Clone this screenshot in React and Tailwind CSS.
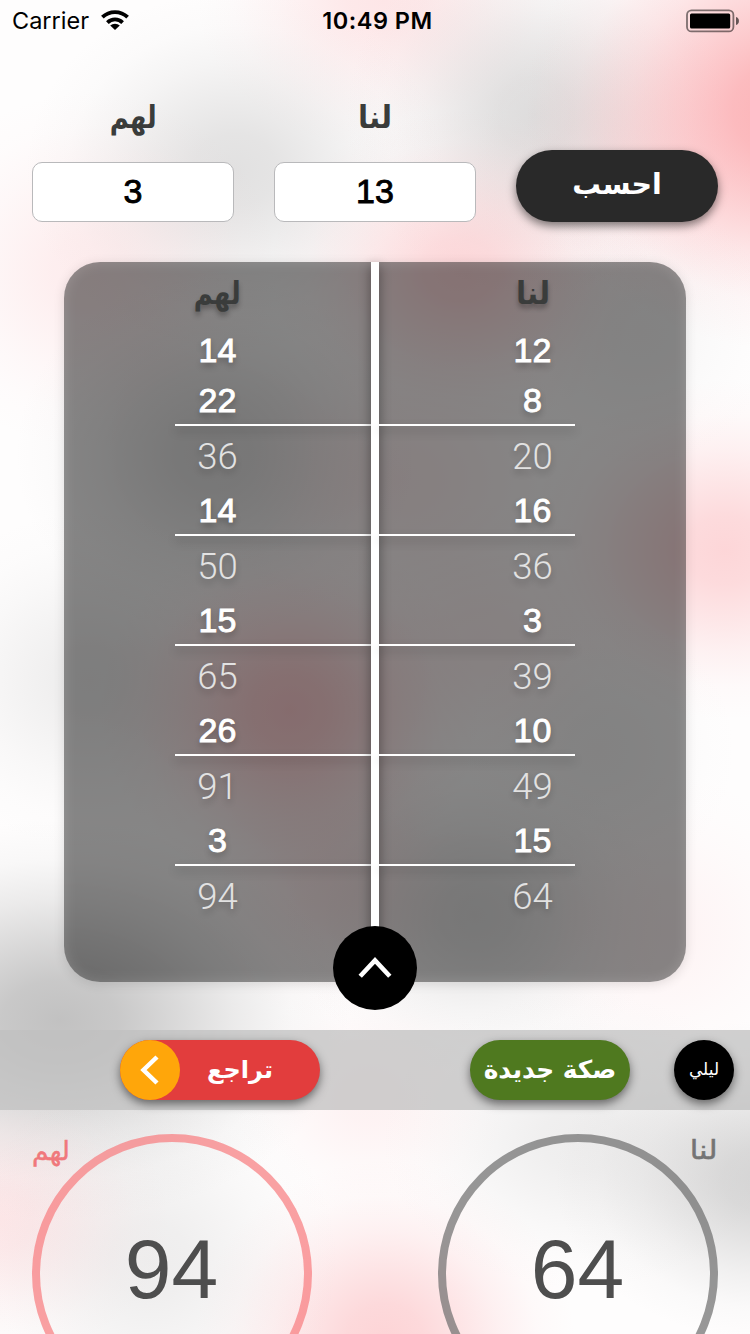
const HELV = "font-['Liberation_Sans',Arial,sans-serif]";
const ARABIC = "font-['DejaVu_Sans',sans-serif]";

const theirs = [14, 22, 36, 14, 50, 15, 65, 26, 91, 3, 94];
const ours = [12, 8, 20, 16, 36, 3, 39, 10, 49, 15, 64];

// Soft colour spots of the backdrop: tone, centre, radii, strength
const spots = [
  ['pink', 385, 0, 190, 150, 0.25],
  ['gray', 235, 170, 210, 180, 0.32],
  ['pink', 640, 170, 170, 150, 0.14],
  ['gray', 535, 115, 190, 180, 0.36],
  ['pink', 785, 110, 260, 240, 0.8],
  ['pink', 90, 270, 190, 180, 0.18],
  ['pink', 460, 270, 190, 160, 0.4],
  ['gray', 215, 455, 200, 180, 0.34],
  ['gray', 640, 330, 140, 140, 0.08],
  ['pink', 400, 480, 190, 160, 0.14],
  ['pink', 725, 550, 200, 170, 0.42],
  ['gray', 90, 680, 190, 170, 0.18],
  ['pink', 290, 710, 190, 180, 0.52],
  ['pink', 480, 640, 160, 140, 0.12],
  ['gray', 600, 750, 140, 140, 0.08],
  ['gray', 475, 915, 190, 160, 0.32],
  ['pink', 330, 880, 150, 140, 0.18],
  ['pink', 660, 930, 170, 160, 0.1],
  ['gray', 60, 1020, 290, 200, 0.68],
  ['pink', 370, 1100, 140, 120, 0.12],
  ['pink', 0, 1220, 170, 140, 0.24],
  ['gray', 150, 1260, 190, 190, 0.18],
  ['gray', 580, 1140, 200, 150, 0.18],
  ['gray', 765, 1180, 210, 160, 0.46],
  ['pink', 385, 1340, 190, 180, 0.44],
];

function Tone({ id, color }) {
  return (
    <radialGradient id={id}>
      <stop offset="0" stopColor={color} stopOpacity="1" />
      <stop offset=".2" stopColor={color} stopOpacity=".88" />
      <stop offset=".4" stopColor={color} stopOpacity=".6" />
      <stop offset=".6" stopColor={color} stopOpacity=".31" />
      <stop offset=".8" stopColor={color} stopOpacity=".09" />
      <stop offset="1" stopColor={color} stopOpacity="0" />
    </radialGradient>
  );
}

function Backdrop() {
  return (
    <svg className="absolute inset-0 h-[1334px] w-[750px]" viewBox="0 0 750 1334" aria-hidden="true">
      <defs>
        <Tone id="pink" color="#fba0a5" />
        <Tone id="gray" color="#a5a5a5" />
      </defs>
      {spots.map(([tone, cx, cy, rx, ry, strength], i) => (
        <ellipse key={i} cx={cx} cy={cy} rx={rx} ry={ry} fill={`url(#${tone})`} opacity={strength} />
      ))}
    </svg>
  );
}

function Bold({ children, className = '' }) {
  return (
    <div className={`${HELV} flex items-center justify-center text-[34px] leading-none text-white [-webkit-text-stroke:0.9px_white] [text-shadow:0_4px_6px_rgba(0,0,0,0.3)] ${className}`}>
      {children}
    </div>
  );
}

function Column({ title, values, lineSide, titleScale }) {
  const [first, ...rest] = values;
  const rounds = [];
  for (let i = 0; i < rest.length; i += 2) rounds.push([rest[i], rest[i + 1]]);
  return (
    <div className="flex flex-1 flex-col">
      <div dir="rtl" className={`${ARABIC} flex h-[62px] items-center justify-center text-[31px] font-bold text-[#3a3c3b] [text-shadow:0_4px_6px_rgba(0,0,0,0.3)]`}>
        <span className={titleScale}>{title}</span>
      </div>
      <Bold className="h-[52px]">{first}</Bold>
      {rounds.map(([value, sum], i) => (
        <div key={i} className="flex flex-col">
          <Bold className="h-12">{value}</Bold>
          <div className={`h-0.5 w-[196px] bg-white shadow-[0_5px_10px_rgba(0,0,0,0.3)] ${lineSide}`} />
          <div className="flex h-[60px] items-center justify-center pt-0.5 font-[Roboto,sans-serif] text-[36.5px] leading-none font-light text-[#e2e2e2] [text-shadow:0_4px_6px_rgba(0,0,0,0.22)]">
            {sum}
          </div>
        </div>
      ))}
    </div>
  );
}

function Field({ label, value, labelScale }) {
  return (
    <div className="flex w-[202px] flex-col">
      <div dir="rtl" className={`${ARABIC} flex h-[70px] items-center justify-center pb-5 text-[31px] font-bold text-[#3a3c3b]`}>
        <span className={labelScale}>{label}</span>
      </div>
      <div className={`${HELV} flex h-[60px] items-center justify-center rounded-[10px] border border-[#b9b9bb] bg-white pb-0.5 text-[34px] leading-none text-black [-webkit-text-stroke:0.9px_black]`}>
        {value}
      </div>
    </div>
  );
}

function Score({ value, border }) {
  return (
    <div className={`${HELV} flex size-[280px] shrink-0 items-center justify-center rounded-full border-8 pr-px pb-2.5 text-[84px] leading-none text-[#4e4e4e] ${border}`}>
      {value}
    </div>
  );
}

export default function App() {
  return (
    <div className="relative h-[1334px] w-[750px] overflow-hidden bg-[#fefdfd]">
      <Backdrop />
      <div className="relative flex h-full flex-col">
        <header className="flex h-[41px] shrink-0 items-center justify-between pr-[11px] pl-3 font-[Inter,sans-serif] text-black">
          <div className="flex w-[200px] items-center gap-3">
            <span className="text-[23.5px] leading-10">Carrier</span>
            <svg className="mb-0.5 h-5 w-7" viewBox="0 0 28 20">
              <path d="M14 20 9.2 15.6a7 7 0 0 1 9.6 0Z" />
              <path d="M6.4 12.6a10.8 10.8 0 0 1 15.2 0M1.4 7.2a18 18 0 0 1 25.2 0" fill="none" stroke="#000" strokeWidth="3.8" />
            </svg>
          </div>
          <span className="pl-1 text-[23.5px] leading-10 font-semibold tracking-[0.5px]">10:49 PM</span>
          <div className="flex w-[200px] justify-end">
            <svg className="h-6 w-[53px]" viewBox="0 0 53 24">
              <rect x="1" y="1.4" width="46.4" height="21" rx="4.5" fill="none" stroke="#000" strokeOpacity=".5" strokeWidth="1.8" />
              <rect x="4" y="4.4" width="40.2" height="15" rx="1.5" />
              <path d="M50 8a4.2 4.2 0 0 1 0 8Z" fillOpacity=".6" />
            </svg>
          </div>
        </header>

        <section className="flex h-[221px] shrink-0 gap-10 px-8 pt-[51px]">
          <Field label="لهم" value="3" labelScale="inline-block scale-x-83" />
          <Field label="لنا" value="13" labelScale="inline-block scale-x-95" />
          <button dir="rtl" className={`${ARABIC} mt-[58px] flex h-[72px] w-[202px] items-center justify-center rounded-full bg-[#292929] pb-0.5 text-[28.5px] font-bold text-white shadow-[0_4px_10px_rgba(0,0,0,0.5)]`}>
            احسب
          </button>
        </section>

        <section className="relative mx-16 flex h-[720px] shrink-0 rounded-[36px] bg-black/47 shadow-[0_2px_12px_rgba(0,0,0,0.12),inset_0_0_14px_rgba(255,255,255,0.16)]">
          <Column title="لهم" values={theirs} lineSide="self-end" titleScale="inline-block scale-x-83" />
          <div className="h-[680px] w-2 bg-white shadow-[0_4px_12px_rgba(0,0,0,0.45)]" />
          <Column title="لنا" values={ours} lineSide="self-start" titleScale="inline-block scale-x-95" />
          <button className="absolute top-[664px] left-[269px] flex size-[84px] items-center justify-center rounded-full bg-black">
            <svg className="mb-0.5 h-[22px] w-[34px]" viewBox="0 0 34 22">
              <path d="M2.2 20.2 17 4.4 31.8 20.2" fill="none" stroke="#fff" strokeWidth="4.6" />
            </svg>
          </button>
        </section>

        <nav className="mt-12 flex h-20 shrink-0 items-center bg-[#c0c0c0]/74 pr-4 pl-[120px]">
          <button className="flex h-[60px] w-[200px] rounded-full bg-[#e23d3d] shadow-[0_4px_10px_rgba(0,0,0,0.5)]">
            <span className="flex size-[60px] items-center justify-center rounded-full bg-[#ffa60a]">
              <svg className="mr-0.5 h-[30px] w-5" viewBox="0 0 20 30">
                <path d="M18 2 4.5 15 18 28" fill="none" stroke="#fff" strokeWidth="4.5" />
              </svg>
            </span>
            <span dir="rtl" className={`${ARABIC} flex h-[60px] w-[120px] items-center justify-center text-[24px] font-bold text-white`}>تراجع</span>
          </button>
          <button dir="rtl" className={`${ARABIC} ml-[150px] flex h-[60px] w-40 items-center justify-center rounded-full bg-[#4f791f] text-[24.8px] font-bold whitespace-nowrap text-white shadow-[0_4px_10px_rgba(0,0,0,0.5)]`}>
            صكة جديدة
          </button>
          <button dir="rtl" className={`${ARABIC} ml-11 flex size-[60px] items-center justify-center rounded-full bg-black text-[17px] text-white shadow-[0_4px_10px_rgba(0,0,0,0.5)]`}>
            ليلي
          </button>
        </nav>

        <section className="relative flex h-[224px] shrink-0 justify-between overflow-hidden px-8 pt-6">
          <Score value="94" border="border-[#f87a7d]/70" />
          <Score value="64" border="border-[#6c6c6c]/70" />
          <span dir="rtl" className={`${ARABIC} absolute top-[21px] left-8 text-[26.5px] leading-10 text-[#f0787c] [-webkit-text-stroke:0.5px_#f0787c]`}>لهم</span>
          <span dir="rtl" className={`${ARABIC} absolute top-5 right-8 origin-right scale-x-118 text-[26px] leading-10 text-[#747474] [-webkit-text-stroke:0.5px_#747474]`}>لنا</span>
        </section>
      </div>
    </div>
  );
}
